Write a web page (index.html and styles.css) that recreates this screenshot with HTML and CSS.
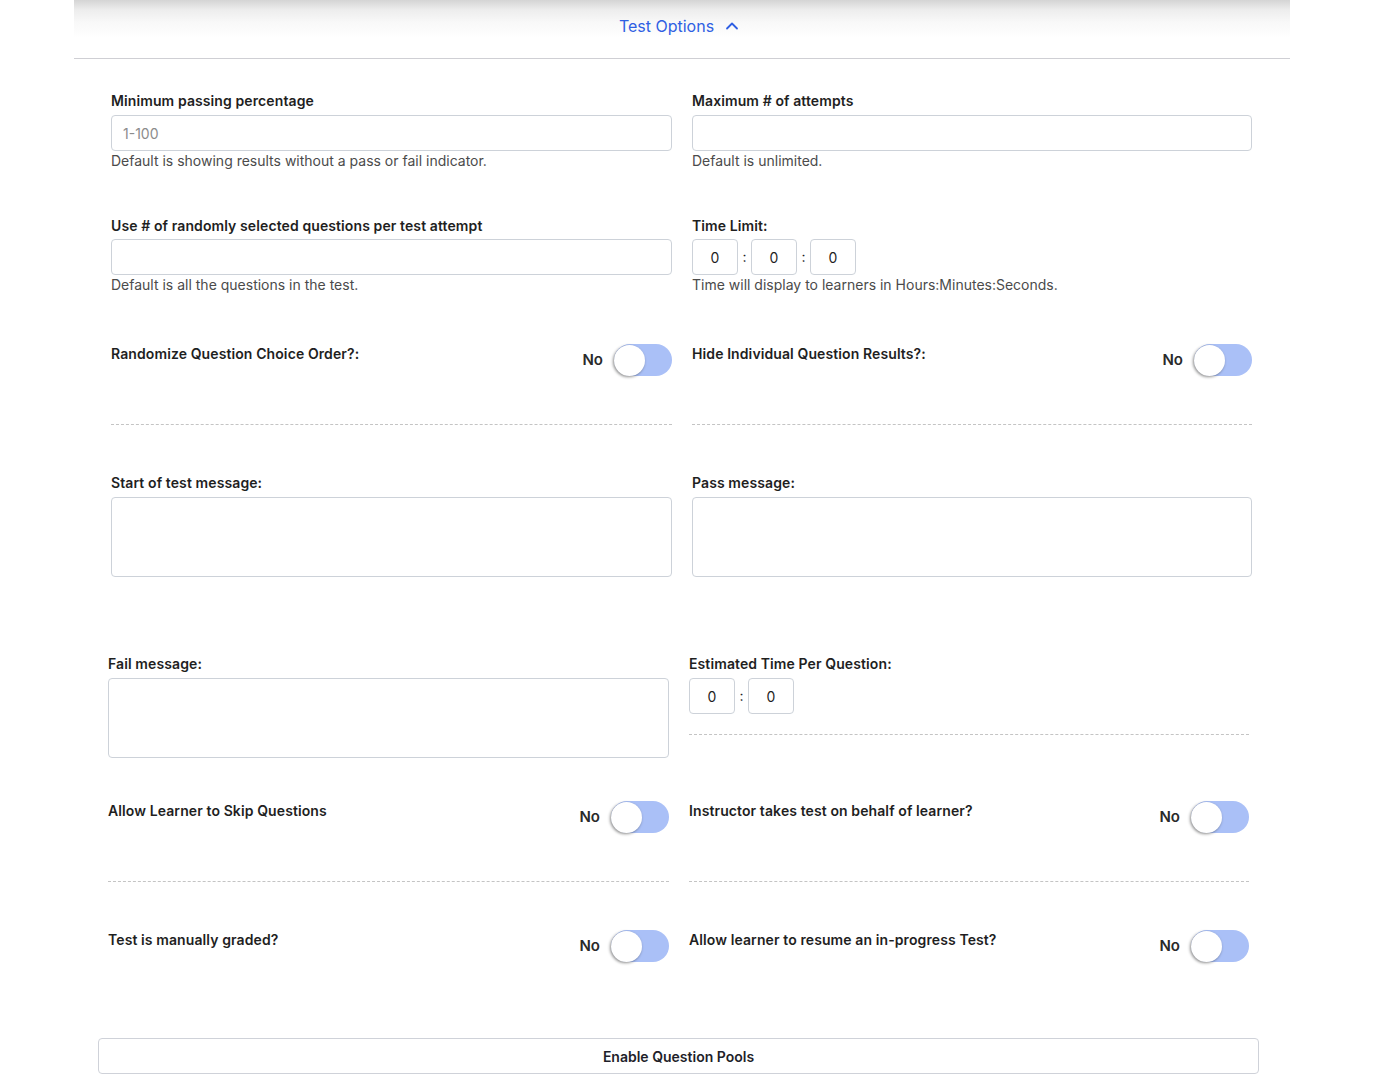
FILE: index.html
```html
<!DOCTYPE html>
<html>
<head>
<meta charset="utf-8">
<link rel="stylesheet" href="styles.css">
</head>
<body>
<div class="page">
  <div class="header">
    <button class="options-link">Test Options
      <svg class="chev" width="14" height="14" viewBox="0 0 14 14"><path d="M2 9.5 L7 4.5 L12 9.5" fill="none" stroke="#2f5fe3" stroke-width="1.8" stroke-linecap="round" stroke-linejoin="round"/></svg>
    </button>
  </div>

  <div class="block block-a">
    <div class="row row-first">
      <div class="field">
        <label class="lbl">Minimum passing percentage</label>
        <input class="txt" type="text" placeholder="1-100">
        <div class="help">Default is showing results without a pass or fail indicator.</div>
      </div>
      <div class="field">
        <label class="lbl">Maximum # of attempts</label>
        <input class="txt" type="text">
        <div class="help">Default is unlimited.</div>
      </div>
    </div>

    <div class="row row-second">
      <div class="field">
        <label class="lbl">Use # of randomly selected questions per test attempt</label>
        <input class="txt" type="text">
        <div class="help">Default is all the questions in the test.</div>
      </div>
      <div class="field">
        <label class="lbl">Time Limit:</label>
        <div class="time">
          <div class="tbox">0</div><span class="colon">:</span><div class="tbox">0</div><span class="colon">:</span><div class="tbox">0</div>
        </div>
        <div class="help">Time will display to learners in Hours:Minutes:Seconds.</div>
      </div>
    </div>

    <div class="row row-toggles">
      <div class="tog-cell dashed">
        <span class="lbl">Randomize Question Choice Order?:</span>
        <div class="tog"><span class="no">No</span><span class="switch"><span class="knob"></span></span></div>
      </div>
      <div class="tog-cell dashed">
        <span class="lbl">Hide Individual Question Results?:</span>
        <div class="tog"><span class="no">No</span><span class="switch"><span class="knob"></span></span></div>
      </div>
    </div>

    <div class="row row-msgs">
      <div class="field">
        <label class="lbl">Start of test message:</label>
        <textarea class="area"></textarea>
      </div>
      <div class="field">
        <label class="lbl">Pass message:</label>
        <textarea class="area"></textarea>
      </div>
    </div>
  </div>

  <div class="block block-b">
    <div class="row row-fail">
      <div class="field">
        <label class="lbl">Fail message:</label>
        <textarea class="area"></textarea>
      </div>
      <div class="field est dashed">
        <label class="lbl">Estimated Time Per Question:</label>
        <div class="time">
          <div class="tbox">0</div><span class="colon">:</span><div class="tbox">0</div>
        </div>
      </div>
    </div>

    <div class="row row-toggles2">
      <div class="tog-cell dashed">
        <span class="lbl">Allow Learner to Skip Questions</span>
        <div class="tog"><span class="no">No</span><span class="switch"><span class="knob"></span></span></div>
      </div>
      <div class="tog-cell dashed">
        <span class="lbl">Instructor takes test on behalf of learner?</span>
        <div class="tog"><span class="no">No</span><span class="switch"><span class="knob"></span></span></div>
      </div>
    </div>

    <div class="row row-toggles3">
      <div class="tog-cell">
        <span class="lbl">Test is manually graded?</span>
        <div class="tog"><span class="no">No</span><span class="switch"><span class="knob"></span></span></div>
      </div>
      <div class="tog-cell">
        <span class="lbl">Allow learner to resume an in-progress Test?</span>
        <div class="tog"><span class="no">No</span><span class="switch"><span class="knob"></span></span></div>
      </div>
    </div>
  </div>

  <div class="footer">
    <button class="pools">Enable Question Pools</button>
  </div>
</div>
</body>
</html>
```

FILE: styles.css
```css
* { box-sizing: border-box; }
html, body { margin: 0; padding: 0; background: #fff; }
body {
  font-family: Inter, "Noto Sans", sans-serif;
  color: #1e1e1e;
  font-size: 14px;
}
.page {
  width: 1216px;
  margin-left: 74px;
}
.header {
  height: 59px;
  border-bottom: 1px solid #cfcfd4;
  background: linear-gradient(to bottom, #d4d4d4 0px, #ededed 10px, #f8f8f8 22px, #ffffff 38px);
  display: flex;
  justify-content: center;
  padding-top: 15px;
}
.options-link {
  border: 0;
  background: transparent;
  font-family: Inter, sans-serif;
  font-size: 16px;
  color: #2f5fe3;
  display: flex;
  align-items: center;
  gap: 11px;
  height: 22px;
  padding: 0;
  margin-left: -6px;
}
.chev { display: block; margin-top: -1px; }

.block { display: flex; flex-direction: column; }
.block-a { padding: 32px 38px 0 37px; }
.block-b { padding: 77px 41px 0 34px; }

.row {
  display: grid;
  grid-template-columns: 561px 560px;
  column-gap: 20px;
  align-items: start;
}
.row-second { margin-top: 45px; }
.row-second .field .lbl { margin-bottom: 3px; }
.row-toggles { margin-top: 49px; }
.row-msgs { margin-top: 48px; }
.row-toggles2 { margin-top: 43px; }
.row-toggles3 { margin-top: 48px; }

.field { display: flex; flex-direction: column; }
.lbl {
  font-weight: 600;
  font-size: 14px;
  line-height: 20px;
  letter-spacing: 0.1px;
  color: #1f1f1f;
  display: block;
}
.field .lbl { margin-bottom: 4px; }
.txt {
  height: 36px;
  border: 1px solid #cdd2d9;
  border-radius: 4px;
  padding: 0 11px;
  font-family: Inter, sans-serif;
  font-size: 14px;
  color: #333;
  outline: none;
}
.txt::placeholder { color: #8c8c8c; }
.help {
  font-size: 14px;
  line-height: 20px;
  color: #4b4b4b;
}
.area {
  height: 80px;
  border: 1px solid #cdd2d9;
  border-radius: 4px;
  resize: none;
  font-family: Inter, sans-serif;
  outline: none;
}
.time { display: flex; align-items: center; height: 36px; }
.tbox {
  width: 46px;
  height: 36px;
  border: 1px solid #cdd2d9;
  border-radius: 4px;
  display: flex;
  align-items: center;
  justify-content: center;
  font-size: 14px;
  color: #1f1f1f;
}
.colon {
  width: 13px;
  text-align: center;
  font-size: 14px;
  color: #1f1f1f;
  margin-top: -1px;
}

.dashed { border-bottom: 1px dashed #c4c4c4; }
.est { padding-bottom: 20px; }

.tog-cell {
  height: 81px;
  display: flex;
  justify-content: space-between;
  align-items: flex-start;
}
.tog { display: flex; align-items: center; height: 32px; gap: 11px; }
.no {
  font-weight: 600;
  font-size: 15px;
  color: #2a2a2a;
  margin-top: -1px;
}
.switch {
  width: 58px;
  height: 32px;
  border-radius: 16px;
  background: #aac0f7;
  display: flex;
  align-items: center;
  padding-left: 0;
}
.knob {
  width: 31px;
  height: 31px;
  border-radius: 50%;
  background: #fff;
  box-shadow: -1px 1px 3px rgba(0,0,0,0.45);
}

.footer { padding: 27px 0 0 24px; }
.pools {
  width: 1161px;
  height: 36px;
  border: 1px solid #cfd2d9;
  border-radius: 4px;
  background: #fff;
  font-family: Inter, sans-serif;
  font-weight: 600;
  font-size: 14px;
  color: #1f1f2a;
}
```
